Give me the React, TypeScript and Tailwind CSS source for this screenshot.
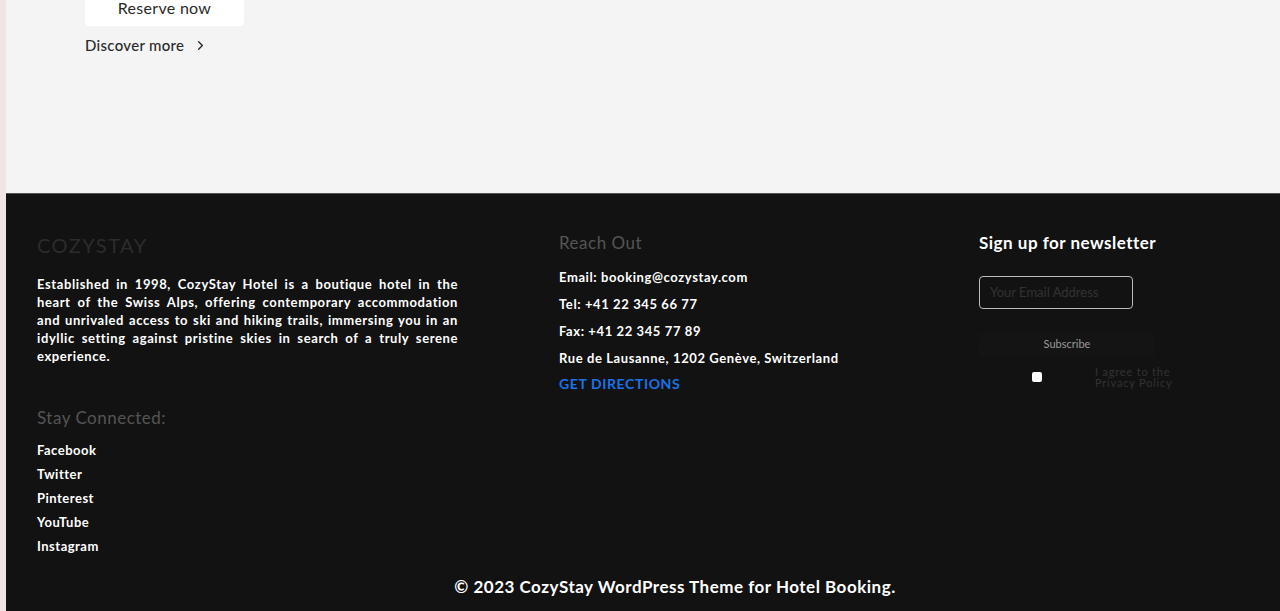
import { ChevronRight } from 'lucide-react';

const font = { fontFamily: '"Lato", "Noto Sans", sans-serif' };

const social = ['Facebook', 'Twitter', 'Pinterest', 'YouTube', 'Instagram'];

const App = () => {
  return (
    <div className="flex min-h-[611px] w-[1280px] bg-[#f1e4e4]" style={font}>
      <div className="w-[6px] shrink-0 bg-[#f1e4e4]"></div>
      <div className="flex flex-1 flex-col">
        {/* top section */}
        <section className="h-[193px] bg-[#f4f4f4] pl-[79px]">
          <button className="flex h-[26px] w-[159px] items-end justify-center rounded-b-[4px] bg-white pb-[6px] text-[16px] tracking-[0.3px] text-[#2a2a2a]">
            Reserve now
          </button>
          <a className="mt-[8px] flex items-center text-[15px] font-medium tracking-[0.3px] text-[#2a2a2a]">
            Discover more
            <ChevronRight className="ml-[9px] h-[15px] w-[15px]" strokeWidth={2.2} />
          </a>
        </section>

        {/* footer */}
        <footer className="flex h-[418px] flex-col border-t border-[#555] bg-[#121212]">
          <div className="flex flex-1 pl-[31px] pt-[36px]">
            <div className="w-[421px]">
              <h2 className="text-[20px] tracking-[1.5px] text-[#2c2c2c]">COZYSTAY</h2>
              <p className="mt-[15px] text-justify text-[13px] font-bold leading-[18px] tracking-[0.6px] text-white">
                Established in 1998, CozyStay Hotel is a boutique hotel in the heart of the Swiss Alps, offering
                contemporary accommodation and unrivaled access to ski and hiking trails, immersing you in an idyllic
                setting against pristine skies in search of a truly serene experience.
              </p>
              <h3 className="mt-[40px] text-[17px] tracking-[0.5px] text-[#555]">Stay Connected:</h3>
              <ul className="mt-[10px] flex flex-col gap-[6px] text-[13px] font-bold leading-[18px] tracking-[0.5px] text-white">
                {social.map((s) => (
                  <li key={s}>{s}</li>
                ))}
              </ul>
            </div>

            <div className="ml-[101px] w-[320px]">
              <h3 className="text-[17px] tracking-[0.5px] text-[#555]">Reach Out</h3>
              <div className="mt-[12px] flex flex-col gap-[9px] text-[13px] font-bold leading-[18px] tracking-[0.6px] text-white">
                <span>Email: booking@cozystay.com</span>
                <span>Tel: +41 22 345 66 77</span>
                <span>Fax: +41 22 345 77 89</span>
                <span>Rue de Lausanne, 1202 Genève, Switzerland</span>
              </div>
              <a className="mt-[6px] block text-[14px] font-bold tracking-[0.6px] text-[#1a73e8]">GET DIRECTIONS</a>
            </div>

            <div className="ml-[100px] w-[200px]">
              <h3 className="text-[17px] font-bold tracking-[0.5px] text-white">Sign up for newsletter</h3>
              <input
                placeholder="Your Email Address"
                className="mt-[20px] h-[33px] w-[154px] rounded-[4px] border border-[#bbb] bg-transparent px-[10px] text-[13px] placeholder:text-[#333]"
              />
              <button className="mt-[24px] h-[24px] w-[176px] rounded-[4px] bg-[#141414] text-[11px] text-[#9a9a9a]">
                Subscribe
              </button>
              <div className="mt-[6px] flex items-start">
                <span className="ml-[53px] mt-[9px] h-[10px] w-[10px] rounded-[2px] bg-white"></span>
                <span className="ml-[53px] mt-[3px] text-[11px] leading-[11px] tracking-[0.8px] text-[#333]">
                  I agree to the
                  <br />
                  Privacy Policy
                </span>
              </div>
            </div>
          </div>
          <p className="pb-[12px] pl-[64px] text-center text-[17px] font-bold tracking-[0.5px] text-white">
            © 2023 CozyStay WordPress Theme for Hotel Booking.
          </p>
        </footer>
      </div>
    </div>
  );
};

export default App;
